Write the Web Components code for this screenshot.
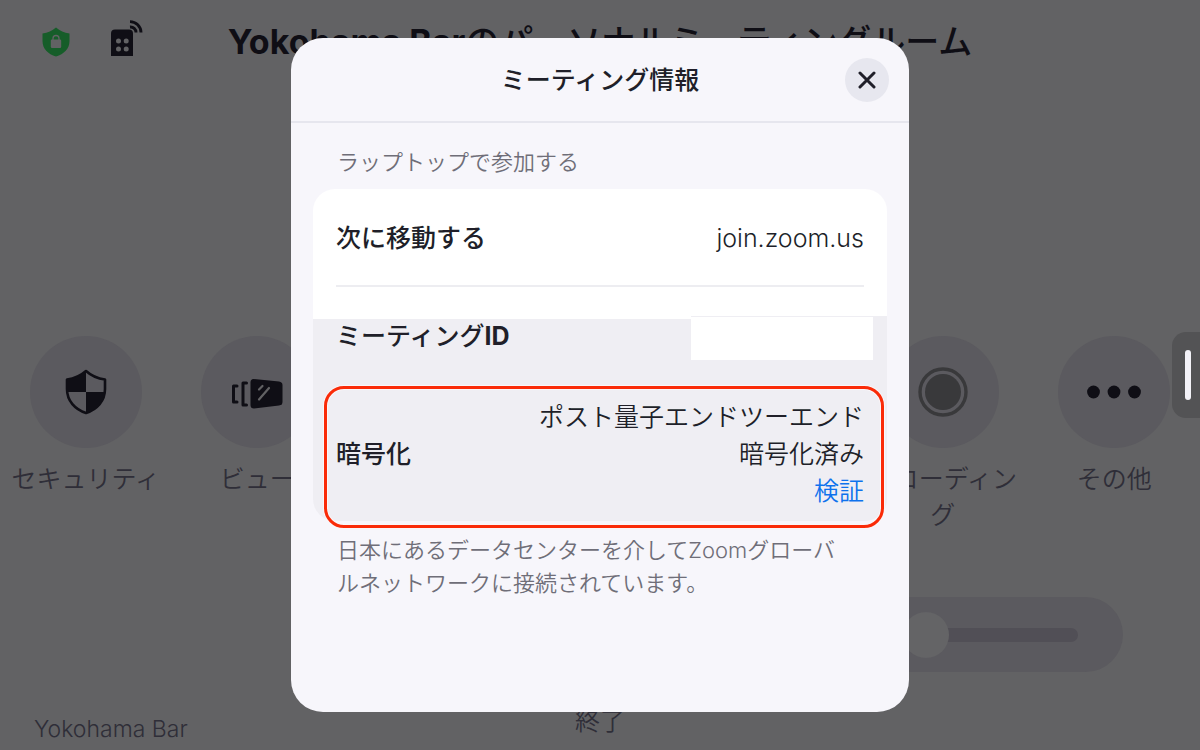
<!DOCTYPE html>
<html lang="ja">
<head>
<meta charset="utf-8">
<title>ミーティング情報</title>
<style>
html, body { margin: 0; height: 100%; }
body { font-family: Inter, "Noto Sans CJK JP", sans-serif; font-size: 25px; font-weight: 350; line-height: 36px; background: #626264; color: #2f2e38; }
</style>
</head>
<body>
<meeting-room></meeting-room>

<script>
const define = (name, html) => {
  const template = document.createElement('template');
  template.innerHTML = html;
  customElements.define(name, class extends HTMLElement {
    constructor() {
      super();
      this.attachShadow({ mode: 'open' }).append(template.content.cloneNode(true));
    }
  });
};

define('room-header', `
<style>
:host { display: grid; grid-template-columns: 1fr auto 1fr; align-items: center; height: 84px; padding: 0 42px; color: #0f0e15; }
.status { display: flex; align-items: end; gap: 40px; padding-bottom: 8px; }
svg { display: block; }
h1 { margin: 0; font-size: 34px; line-height: 48px; font-weight: 500; white-space: nowrap; }
::slotted(b) { font-weight: 650; }
</style>
<div class="status">
  <svg width="28" height="30" viewBox="0 0 28 30" role="img" aria-label="暗号化">
    <path d="M14 0.5C18 4 22 5.8 27.5 6.5V14C27.5 22 22 27 14 29.5C6 27 0.500 22 0.500 14V6.500C6 5.800 10 4 14 0.500Z" fill="#165d29"/>
    <rect x="8.800" y="12.500" width="10.400" height="8.500" rx="1.200" fill="#626264"/>
    <path d="M11 13V11.500a3 3 0 0 1 6 0V13" fill="none" stroke="#626264" stroke-width="1.300"/>
  </svg>
  <svg width="34" height="38" viewBox="0 0 34 38" role="img" aria-label="コントローラー">
    <path d="M1 37V14.500Q1 10.500 5 10.500H19Q23 10.500 23 14.500V37Z" fill="#0f0e15"/>
    <g fill="#626264"><circle cx="8.500" cy="22" r="2.500"/><circle cx="16.200" cy="22" r="2.500"/><circle cx="8.500" cy="30" r="2.500"/><circle cx="16.200" cy="30" r="2.500"/></g>
    <path d="M20 2.600A11 11 0 0 1 31 13.500M20 8A5.500 5.500 0 0 1 26 13.500" fill="none" stroke="#0f0e15" stroke-width="2.900"/>
  </svg>
</div>
<h1><slot></slot></h1>
<span></span>`);

define('room-action', `
<style>
:host { display: block; }
button { display: flex; flex-direction: column; align-items: center; gap: 13px; width: 100%; padding: 0; border: 0; background: none; color: inherit; font: inherit; cursor: pointer; }
.disc { display: grid; place-items: center; width: 112px; height: 112px; border-radius: 50%; background: #5b5a5f; color: #0f0e15; }
.label { max-width: 152px; word-break: break-all; }
</style>
<button type="button"><span class="disc"><slot name="icon"></slot></span><span class="label"><slot></slot></span></button>`);

define('room-volume', `
<style>
:host { display: flex; align-items: center; align-self: end; width: 65%; height: 75px; margin-right: 77px; padding: 0 45px; border-radius: 38px; background: #5b5a5f; box-sizing: border-box; }
input { appearance: none; flex: 1; min-width: 0; height: 46px; margin: 0; background: none; }
input::-webkit-slider-runnable-track { height: 14px; border-radius: 7px; background: #514f56; }
input::-webkit-slider-thumb { appearance: none; width: 46px; height: 46px; margin-top: -16px; border-radius: 50%; background: #646466; }
</style>
<input type="range" min="0" max="100" value="80" aria-label="音量">`);

define('drawer-handle', `
<style>
:host { position: absolute; right: 0; top: 50%; transform: translateY(-50%); }
button { display: flex; align-items: center; width: 28px; height: 86px; padding: 0 0 0 13px; border: 0; border-radius: 14px 0 0 14px; background: #535355; }
span { width: 6px; height: 50px; border-radius: 3px; background: #f3f2f8; }
</style>
<button type="button" aria-label="パネルを開く"><span></span></button>`);

define('info-row', `
<style>
:host { display: flex; align-items: center; justify-content: space-between; gap: 16px; margin: 0 23px; line-height: 37px; color: #201f29; box-sizing: border-box; }
.name { font-weight: 500; }
.value { text-align: right; }
</style>
<span class="name"><slot name="name"></slot></span><span class="value"><slot></slot></span>`);

define('info-card', `
<style>
:host { display: block; position: relative; border-radius: 22px; background: linear-gradient(#fff 130px, #efeef3 130px); }
.url { height: 98px; padding-top: 2px; border-bottom: 2px solid #ededf1; }
.id { height: 98px; }
.encryption { height: 136px; padding-top: 2px; }
b { font-weight: 650; }
a { color: #0e72ed; text-decoration: none; }
.mask { position: absolute; top: 127px; right: 0; width: 182px; height: 43px; border-top: 1px solid #efeef3; border-right: 14px solid #efeef3; background: #fff; }
.highlight { position: absolute; top: 197px; left: 11px; right: 3px; height: 136px; border: 3px solid #fa2b08; border-radius: 20px; box-shadow: 0 0 0 1px #fbf6f8, inset 0 0 0 1px #fbf6f8; pointer-events: none; }
</style>
<info-row class="url"><span slot="name">次に移動する</span>join.zoom.us</info-row>
<info-row class="id"><span slot="name">ミーティング<b>ID</b></span></info-row>
<info-row class="encryption"><span slot="name">暗号化</span>ポスト量子エンドツーエンド<br>暗号化済み<br><a href="#verify">検証</a></info-row>
<div class="mask"></div>
<div class="highlight"></div>`);

define('info-dialog', `
<style>
:host { display: block; box-sizing: border-box; width: 618px; max-width: 100%; min-height: 674px; border-radius: 32px; background: #f7f6fb; color: #6f6e78; }
header { display: grid; grid-template-columns: 44px 1fr 44px; align-items: center; height: 83px; padding: 0 20px; border-bottom: 2px solid #e6e6ee; }
h2 { grid-column: 2; margin: 0; text-align: center; font-size: 25px; font-weight: 500; color: #201f29; }
button { display: grid; place-items: center; width: 44px; height: 44px; padding: 0; border: 0; border-radius: 50%; background: #e7e7ef; }
.body { padding: 23px 22px 0; font-size: 22px; line-height: 33px; }
h3, p { margin: 0 40px 0 24px; font: inherit; }
info-card { margin: 10px 0 13px; font-size: 25px; }
</style>
<header>
  <h2>ミーティング情報</h2>
  <button type="button" aria-label="閉じる"><svg width="18" height="18" viewBox="0 0 18 18"><path d="M2 2L16 16M16 2L2 16" stroke="#201f29" stroke-width="3" stroke-linecap="round"/></svg></button>
</header>
<div class="body">
  <h3>ラップトップで参加する</h3>
  <info-card></info-card>
  <p>日本にあるデータセンターを介してZoomグローバルネットワークに接続されています。</p>
</div>`);

define('meeting-room', `
<style>
:host { display: flex; flex-direction: column; position: relative; min-height: 100%; overflow: hidden; }
.actions { display: grid; grid-template-columns: repeat(7, 1fr); margin-top: auto; padding-bottom: 64px; }
.view { grid-column: 2; }
.record { grid-column: 6; }
svg { display: block; }
footer { display: grid; grid-template-columns: 1fr auto 1fr; align-items: end; height: 75px; padding: 0 34px 3px; }
.end { margin-bottom: 8px; padding: 0; border: 0; background: none; color: inherit; font: inherit; }
.name { font-size: 23px; }
.overlay { position: absolute; inset: 0; display: grid; place-items: center; }
</style>
<room-header><b>Yokohama Bar</b>のパーソナルミーティングルーム</room-header>
<div class="actions">
  <room-action>
    <svg slot="icon" width="42" height="46" viewBox="0 0 42 46"><path d="M21 2C26 6.500 32 9.500 40 10.500V20C40 32 32 40.500 21 44C10 40.500 2 32 2 20V10.500C10 9.500 16 6.500 21 2Z" fill="none" stroke="currentColor" stroke-width="2.600" stroke-linejoin="round"/><path d="M21 2V23H2V10.500C10 9.500 16 6.500 21 2ZM21 23H40C39 33 32 40.500 21 44Z" fill="currentColor"/></svg>
    セキュリティ
  </room-action>
  <room-action class="view">
    <svg slot="icon" width="52" height="36" viewBox="0 -4 52 36"><path d="M6 8H2.500V24H6M15.500 5H12V27H15.500" fill="none" stroke="currentColor" stroke-width="3" stroke-linecap="round" stroke-linejoin="round"/><path d="M22.500 1L48 3.500Q51.500 4 51.500 7V24Q51.500 27 48 27.500L23 30.500Q19.500 30.500 19.500 27V4.500Q19.500 1 22.500 1Z" fill="currentColor"/><path d="M28 11.500L31.500 8M28 21.500L38 10" stroke="#626264" stroke-width="2.200" stroke-linecap="round"/></svg>
    ビュー
  </room-action>
  <room-action class="record">
    <svg slot="icon" width="50" height="50" viewBox="0 0 50 50"><circle cx="25" cy="25" r="23" fill="none" stroke="#39393b" stroke-width="3.400"/><circle cx="25" cy="25" r="18" fill="#39393b"/></svg>
    レコーディング
  </room-action>
  <room-action>
    <svg slot="icon" width="54" height="14" viewBox="0 0 54 14"><g fill="currentColor"><circle cx="6.500" cy="7" r="6.400"/><circle cx="27" cy="7" r="6.400"/><circle cx="47.500" cy="7" r="6.400"/></g></svg>
    その他
  </room-action>
</div>
<room-volume></room-volume>
<footer><span class="name">Yokohama Bar</span><button class="end" type="button">終了</button></footer>
<div class="overlay"><info-dialog role="dialog" aria-label="ミーティング情報"></info-dialog></div>
<drawer-handle></drawer-handle>`);
</script>
</body>
</html>
